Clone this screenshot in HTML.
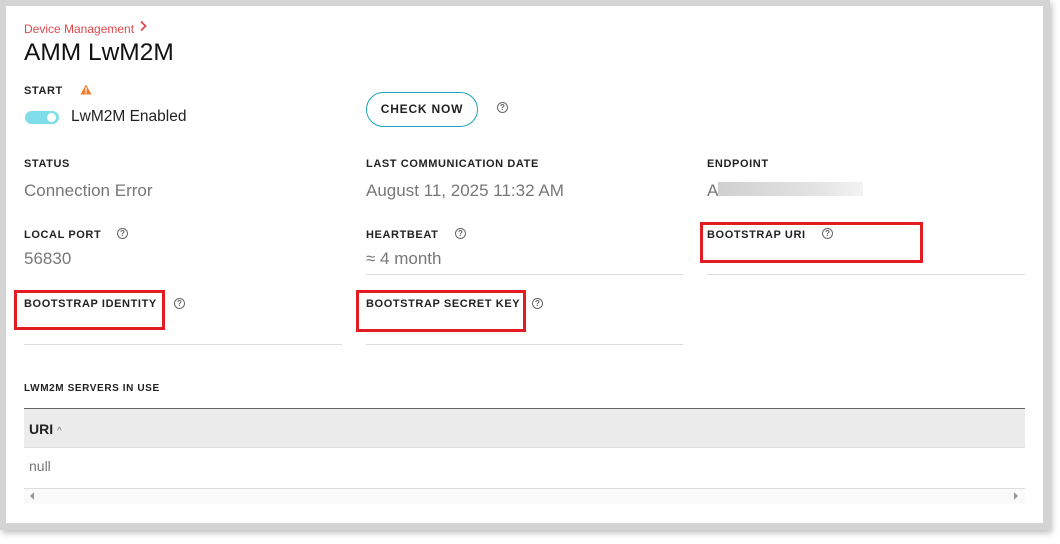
<!DOCTYPE html>
<html><head><style>
*{margin:0;padding:0;box-sizing:border-box}
body{width:1060px;height:544px;background:#fff;font-family:"Liberation Sans",sans-serif;position:relative;overflow:hidden}
.frame{position:absolute;left:0;top:0;width:1050px;height:530px;background:#d4d4d4;box-shadow:2px 3px 6px rgba(0,0,0,.25)}
.card{position:absolute;left:6px;top:6px;width:1037px;height:517px;background:#fff}
.a{position:absolute;white-space:nowrap}
.lbl{font-size:11px;font-weight:bold;letter-spacing:.6px;color:#222}
.val{font-size:17px;color:#777}
.line{position:absolute;height:1px;background:#ddd}
.q{position:absolute;width:11px;height:11px;border:1.3px solid #666;border-radius:50%;font-size:8px;line-height:9px;text-align:center;color:#666;font-weight:bold}
.red{position:absolute;border:3px solid #e31b23}
</style></head><body>
<div class="frame"></div>
<div class="card"></div>
<div class="a" style="left:24px;top:22px;font-size:12px;color:#e2474b">Device Management</div>
<svg class="a" style="left:138px;top:20px" width="10" height="12"><path d="M3 1.5 L7.5 6 L3 10.5" stroke="#e2474b" stroke-width="1.8" fill="none"/></svg>
<div class="a" style="left:24px;top:39px;font-size:24.5px;color:#111">AMM LwM2M</div>
<div class="a lbl" style="left:24px;top:85px">START</div>
<svg class="a" style="left:80px;top:84px" width="12" height="11"><path d="M6 0.5 L11.5 10.5 H0.5Z" fill="#f27b2a"/><rect x="5.3" y="3.5" width="1.4" height="4" fill="#fff"/><rect x="5.3" y="8.3" width="1.4" height="1.3" fill="#fff"/></svg>
<div class="a" style="left:25px;top:111px;width:34px;height:13px;border-radius:7px;background:#80deea"></div>
<div class="a" style="left:45px;top:111px;width:13px;height:13px;border-radius:50%;background:#fff;border:2px solid #80deea"></div>
<div class="a" style="left:71px;top:108px;font-size:15.5px;color:#222">LwM2M Enabled</div>
<div class="a" style="left:366px;top:92px;width:112px;height:35px;border:1.3px solid #1aa6b7;border-radius:18px;font-size:12px;font-weight:bold;letter-spacing:.8px;color:#222;text-align:center;line-height:32px">CHECK NOW</div>
<div class="q" style="left:497px;top:102px">?</div>

<div class="a lbl" style="left:24px;top:158px">STATUS</div>
<div class="a val" style="left:24px;top:181px">Connection Error</div>
<div class="a lbl" style="left:366px;top:158px">LAST COMMUNICATION DATE</div>
<div class="a val" style="left:366px;top:181px">August 11, 2025 11:32 AM</div>
<div class="a lbl" style="left:707px;top:158px">ENDPOINT</div>
<div class="a val" style="left:707px;top:181px">A</div>
<div class="a" style="left:718px;top:182px;width:145px;height:14px;background:linear-gradient(90deg,#d0d0d0,#e4e4e4 70%,#f3f3f3)"></div>

<div class="a lbl" style="left:24px;top:229px">LOCAL PORT</div>
<div class="q" style="left:117px;top:228px">?</div>
<div class="a val" style="left:24px;top:249px">56830</div>
<div class="a lbl" style="left:366px;top:229px">HEARTBEAT</div>
<div class="q" style="left:455px;top:228px">?</div>
<div class="a val" style="left:366px;top:249px">≈ 4 month</div>
<div class="a lbl" style="left:707px;top:229px">BOOTSTRAP URI</div>
<div class="q" style="left:822px;top:228px">?</div>
<div class="line" style="left:366px;top:274px;width:317px"></div>
<div class="line" style="left:707px;top:274px;width:318px"></div>
<div class="red" style="left:700px;top:222px;width:223px;height:41px"></div>

<div class="a lbl" style="left:24px;top:298px">BOOTSTRAP IDENTITY</div>
<div class="q" style="left:174px;top:298px">?</div>
<div class="a lbl" style="left:366px;top:298px">BOOTSTRAP SECRET KEY</div>
<div class="q" style="left:532px;top:298px">?</div>
<div class="line" style="left:24px;top:344px;width:318px"></div>
<div class="line" style="left:366px;top:344px;width:317px"></div>
<div class="red" style="left:14px;top:290px;width:151px;height:40px"></div>
<div class="red" style="left:356px;top:290px;width:170px;height:42px"></div>

<div class="a lbl" style="left:24px;top:383px;font-size:10px">LWM2M SERVERS IN USE</div>
<div class="a" style="left:24px;top:408px;width:1001px;height:1.5px;background:#666"></div>
<div class="a" style="left:24px;top:409px;width:1001px;height:39px;background:#ececec;border-bottom:1px solid #ddd"></div>
<div class="a" style="left:29px;top:421px;font-size:14px;font-weight:bold;color:#222">URI <span style="font-weight:normal;font-size:10px;color:#777">^</span></div>
<div class="a" style="left:29px;top:458px;font-size:14px;color:#777">null</div>
<div class="a" style="left:24px;top:488px;width:1001px;height:16px;background:#fafafa;border-top:1px solid #ddd"></div>
<svg class="a" style="left:29px;top:492px" width="6" height="8"><path d="M5 0 L1 4 L5 8Z" fill="#999"/></svg>
<svg class="a" style="left:1013px;top:492px" width="6" height="8"><path d="M1 0 L5 4 L1 8Z" fill="#999"/></svg>
</body></html>
